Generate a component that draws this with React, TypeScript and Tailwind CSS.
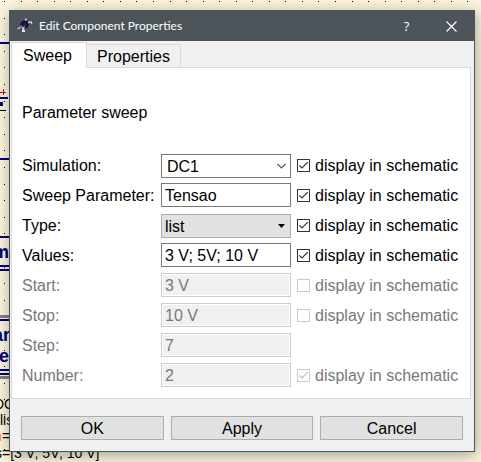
import React from "react";

const FONT = "font-['Liberation_Sans',Arial,sans-serif]";

function Canvas() {
  const dots: React.ReactElement[] = [];
  for (let i = 0; i < 60; i++) {
    for (let j = 0; j < 60; j++) {
      dots.push(
        <rect key={`${i}-${j}`} x={Math.round(4 + i * 16.55)} y={Math.round(1 + j * 16.6)} width="1" height="1" fill="#000" />
      );
    }
  }
  return (
    <svg
      className="absolute inset-0 h-full w-full font-['Liberation_Sans',Arial,sans-serif]"
      shapeRendering="crispEdges"
      aria-hidden="true"
    >
      {dots}
      <g fill="#00007f">
        <rect x="0" y="42" width="12" height="2" />
        <rect x="0" y="97" width="8" height="2" />
        <rect x="0" y="102" width="3" height="4" />
        <rect x="0" y="158" width="12" height="2" />
        <rect x="0" y="236" width="12" height="2" />
        <rect x="0" y="265" width="12" height="2" />
        <rect x="0" y="269" width="12" height="2" />
        <rect x="0" y="319" width="12" height="2" />
        <rect x="0" y="369" width="12" height="2" />
        <rect x="0" y="373" width="12" height="2" />
      </g>
      <rect x="0" y="315" width="12" height="3" fill="#808080" />
      <rect x="0" y="376" width="12" height="3" fill="#808080" />
      <path d="M0 92.5H6M3.5 89V95" stroke="#e00000" />
      <path d="M0 110.5H6" stroke="#000" />
      <g fill="#00007f" fontSize="18" fontWeight="700">
        <text x="-7" y="258">m</text>
        <text x="-7" y="341">ar</text>
        <text x="-1" y="362">e</text>
      </g>
      <g fontSize="14">
        <text x="-6" y="409">DC</text>
        <text x="0" y="425">lis</text>
        <text x="-6" y="441" fill="#ff7f00">n</text>
        <text x="2" y="441">=</text>
        <text x="-5" y="458">s=[3 V; 5V; 10 V]</text>
      </g>
    </svg>
  );
}

function AppIcon() {
  return (
    <svg width="16" height="16" viewBox="0 0 16 16" aria-hidden="true">
      <path d="M3 6 5 3 8 2 11 4 12 7 10 10 7 11 4 9Z" fill="#14142a" />
      <path d="M7 5 10 6 9 9 6 8Z" fill="#3a2038" />
      <path d="M8 2.5 9.5 0.5M11 4.5 15 4M14 4 15 6M4 9 0.5 11" stroke="#c9cbe0" strokeWidth="1.4" fill="none" />
      <path d="M6 9 6.5 13.5M5 13H8" stroke="#dfe3f4" strokeWidth="1.8" fill="none" />
      <path d="M4.5 7 4 10M7 8 7.5 11" stroke="#6474b8" strokeWidth="1.5" />
    </svg>
  );
}

type CheckProps = { id: string; checked: boolean; disabled?: boolean };

function SchematicCheck({ id, checked, disabled }: CheckProps) {
  return (
    <label
      htmlFor={id}
      className={`flex h-6 items-center gap-[5px] whitespace-nowrap ${disabled ? "text-[#787878]" : "text-black"}`}
    >
      <span className="grid">
        <input
          id={id}
          type="checkbox"
          defaultChecked={checked}
          disabled={disabled}
          className="peer col-start-1 row-start-1 size-[13px] appearance-none border border-[#333333] bg-white disabled:border-[#cccccc]"
        />
        <svg
          viewBox="0 0 13 13"
          className="pointer-events-none invisible col-start-1 row-start-1 size-[13px] text-[#333333] peer-checked:visible peer-disabled:text-[#bcbcbc]"
          aria-hidden="true"
        >
          <path d="M2.3 6.3 5 9 10.8 3.2" stroke="currentColor" strokeWidth="1.2" fill="none" />
        </svg>
      </span>
      <span className="pt-[2px]">display in schematic</span>
    </label>
  );
}

type Row = {
  id: string;
  label: string;
  value: string;
  kind: "combo" | "text" | "select";
  disabled?: boolean;
  check?: boolean;
};

const rows: Row[] = [
  { id: "simulation", label: "Simulation:", value: "DC1", kind: "combo", check: true },
  { id: "parameter", label: "Sweep Parameter:", value: "Tensao", kind: "text", check: true },
  { id: "type", label: "Type:", value: "list", kind: "select", check: true },
  { id: "values", label: "Values:", value: "3 V; 5V; 10 V", kind: "text", check: true },
  { id: "start", label: "Start:", value: "3 V", kind: "text", disabled: true, check: false },
  { id: "stop", label: "Stop:", value: "10 V", kind: "text", disabled: true, check: false },
  { id: "step", label: "Step:", value: "7", kind: "text", disabled: true },
  { id: "number", label: "Number:", value: "2", kind: "text", disabled: true, check: true },
];

function Field({ row }: { row: Row }) {
  if (row.kind === "text") {
    return (
      <input
        id={row.id}
        type="text"
        defaultValue={row.value}
        disabled={row.disabled}
        className="h-6 w-full min-w-0 border border-[#7a7a7a] bg-white px-[3px] pt-[2px] text-black disabled:border-[#cccccc] disabled:bg-[#f0f0f0] disabled:text-[#787878] disabled:shadow-[inset_0_0_0_1px_#ffffff]"
      />
    );
  }
  const combo = row.kind === "combo";
  return (
    <div className="grid items-center">
      <select
        id={row.id}
        defaultValue={row.value}
        className={`col-start-1 row-start-1 h-6 w-full appearance-none border pr-5 leading-6 text-black ${
          combo ? "border-[#7a7a7a] bg-white pl-[5px]" : "border-[#adadad] bg-[#e1e1e1] pl-[3px]"
        }`}
      >
        <option>{row.value}</option>
      </select>
      <svg
        width="9"
        height="6"
        viewBox="0 0 9 6"
        className="pointer-events-none col-start-1 row-start-1 mr-[5px] justify-self-end"
        aria-hidden="true"
      >
        {combo ? (
          <path d="M0.5 1 4.5 5 8.5 1" stroke="#555" strokeWidth="1.1" fill="none" />
        ) : (
          <path d="M1 1H8L4.5 5Z" fill="#000" />
        )}
      </svg>
    </div>
  );
}

export default function App() {
  return (
    <div className={`relative min-h-screen overflow-hidden bg-[#fbf5de] pt-[10px] pr-[6px] pb-[10px] pl-[9px] text-[16px] leading-6 text-black ${FONT}`}>
      <Canvas />
      <main className="relative border border-[#4c545a] bg-[#f0f0f0] shadow-[1px_3px_14px_rgba(0,0,0,0.35)]">
        <header className="flex h-[30px] items-center bg-[#4c545a] pl-[7px] text-white">
          <AppIcon />
          <h1 className="ml-[6px] flex-1 font-['Lato',sans-serif] text-[12px] leading-4">Edit Component Properties</h1>
          <button type="button" aria-label="Help" className="w-[45px] font-['Open_Sans',sans-serif] text-[13px] leading-4">
            ?
          </button>
          <button type="button" aria-label="Close" className="flex w-[45px] justify-center">
            <svg width="11" height="11" viewBox="0 0 11 11" aria-hidden="true">
              <path d="M0.5 0.5 10.5 10.5M10.5 0.5 0.5 10.5" stroke="#fff" strokeWidth="1.2" />
            </svg>
          </button>
        </header>

        <div className="pt-px pr-[3px] pl-px">
          <div role="tablist" className="flex items-end">
            <button
              type="button"
              role="tab"
              aria-selected="true"
              className="z-10 -mb-px h-[26px] w-[76px] border border-b-0 border-[#d9d9d9] bg-white pr-[3px]"
            >
              Sweep
            </button>
            <button
              type="button"
              role="tab"
              aria-selected="false"
              className="h-[23px] w-[94px] border border-b-0 border-l-0 border-[#d9d9d9] bg-[#f0f0f0] pt-px leading-[22px]"
            >
              Properties
            </button>
          </div>
          <section role="tabpanel" className="border border-[#d9d9d9] bg-white px-[10px] pt-[33px] pb-[11px]">
            <h2 className="mb-7">Parameter sweep</h2>
            <div className="flex flex-col gap-[6px]">
              {rows.map((row) => (
                <div key={row.id} className="grid h-6 grid-cols-[133px_1fr_163px] gap-x-[6px]">
                  <label
                    htmlFor={row.id}
                    className={`leading-[26px] whitespace-nowrap ${row.disabled ? "text-[#787878]" : "text-black"}`}
                  >
                    {row.label}
                  </label>
                  <Field row={row} />
                  {row.check !== undefined && (
                    <SchematicCheck id={`${row.id}-show`} checked={row.check} disabled={row.disabled} />
                  )}
                </div>
              ))}
            </div>
          </section>
        </div>

        <footer className="grid grid-cols-3 gap-[7px] px-[11px] pt-[17px] pb-[11px]">
          {["OK", "Apply", "Cancel"].map((name) => (
            <button key={name} type="button" className="h-6 border border-[#adadad] bg-[#e1e1e1] pt-px leading-[22px]">
              {name}
            </button>
          ))}
        </footer>
      </main>
    </div>
  );
}
